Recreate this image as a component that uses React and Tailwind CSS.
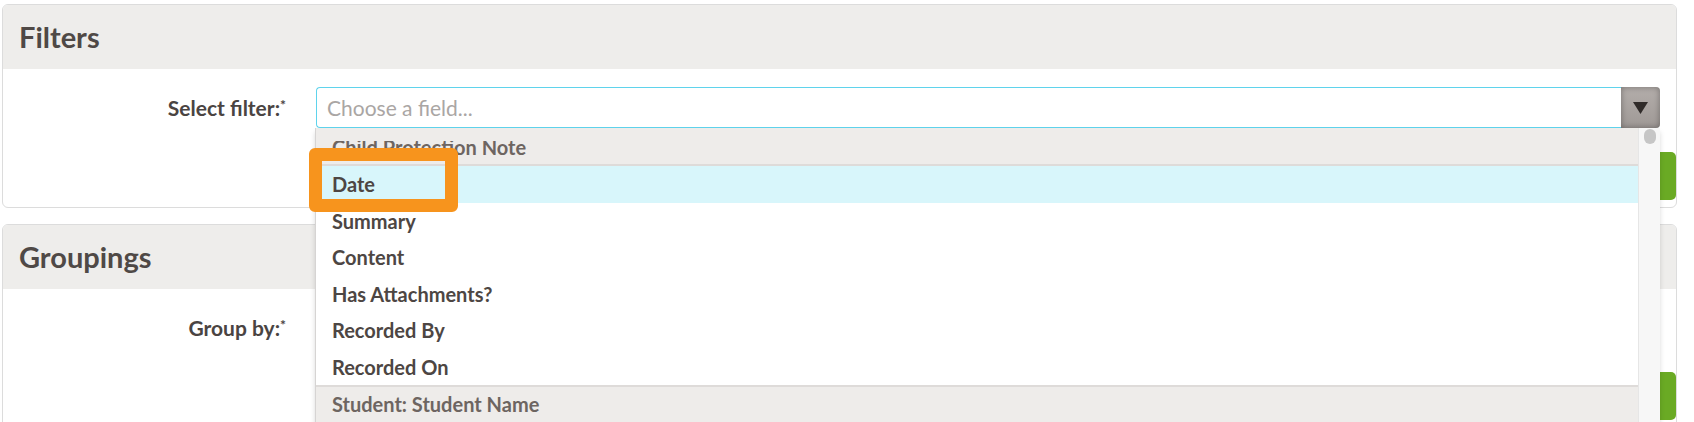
function Panel({ title, label, placeholder }) {
    return (
        <section className="border border-[#dcdcdc] rounded-[6px] overflow-hidden bg-white">
            <div className="h-[64px] bg-[#eeedeb] pl-[16px] flex items-center text-[29px] font-bold text-[#4f4946]">
                {title}
            </div>
            <div className="flex flex-col pt-[18px] pb-[7px]">
                <div className="flex items-center pr-[16px]">
                    <div className="w-[283px] text-right text-[21px] font-bold text-[#4a4442] whitespace-nowrap">
                        {label}
                        <span className="inline-block text-[14px] relative -top-[6px]">*</span>
                    </div>
                    <div className="ml-[30px] flex-1 flex h-[41px]">
                        <div className="flex-1 flex items-center border border-r-0 border-[#5fd3ec] rounded-l-[4px] pl-[10px] text-[21px] text-[#aaa6a4]">
                            {placeholder}
                        </div>
                        <div className="w-[39px] flex items-center justify-center rounded-r-[4px] bg-gradient-to-b from-[#b3adaa] to-[#9f9996] shadow-[inset_0_0_6px_rgba(0,0,0,0.35)]">
                            <svg width="15" height="12" viewBox="0 0 15 12">
                                <polygon points="0,0 15,0 7.5,12" fill="#302b29" />
                            </svg>
                        </div>
                    </div>
                </div>
                <div className="flex justify-end mt-[24px]">
                    <div className="w-[120px] h-[48px] bg-[#6aaa24] rounded-[5px]" />
                </div>
            </div>
        </section>
    );
}

const items = ['Date', 'Summary', 'Content', 'Has Attachments?', 'Recorded By', 'Recorded On'];

export default function App() {
    return (
        <div className="relative h-[422px] overflow-hidden bg-white pt-[4px] pl-[2px] pr-[17px] font-['Lato',sans-serif]">
            <div className="flex flex-col gap-[16px]">
                <Panel title="Filters" label="Select filter:" placeholder="Choose a field..." />
                <Panel title="Groupings" label="Group by:" placeholder="" />
            </div>

            {/* dropdown results */}
            <div className="absolute left-[315px] top-[128px] w-[1345px] h-[300px] flex bg-white border-l border-[#d6d4d3] shadow-[0_4px_5px_rgba(0,0,0,0.15)]">
                <ul className="flex-1 flex flex-col text-[20px] font-bold text-[#4d4643]">
                    <li className="h-[38px] shrink-0 bg-[#eeecea] border-b-2 border-[#dedbd9] pl-[16px] pt-[13px]">
                        <div className="h-[23px] overflow-hidden">
                            <div className="-mt-[7px] leading-[27px] text-[#6d6561]">Child Protection Note</div>
                        </div>
                    </li>
                    {items.map((item, i) => (
                        <li key={item}
                            className={`h-[36.5px] shrink-0 flex items-center pl-[16px] ${i === 0 ? 'bg-[#d8f6fb]' : ''}`}>
                            {item}
                        </li>
                    ))}
                    <li className="h-[38px] shrink-0 flex items-center bg-[#eeecea] border-t-2 border-[#dedbd9] pl-[16px] pb-[3px] text-[#6d6561]">
                        Student: Student Name
                    </li>
                </ul>
                <div className="w-[22px] bg-[#f7f7f7] border-l border-[#e6e6e6] flex justify-center pt-[1px]">
                    <div className="w-[12px] h-[15px] rounded-full bg-[#c6c6c6]" />
                </div>
            </div>

            {/* highlight */}
            <div className="absolute left-[309px] top-[148px] w-[149px] h-[64px] border-[13px] border-[#f7941d] rounded-[6px]" />
        </div>
    );
}
